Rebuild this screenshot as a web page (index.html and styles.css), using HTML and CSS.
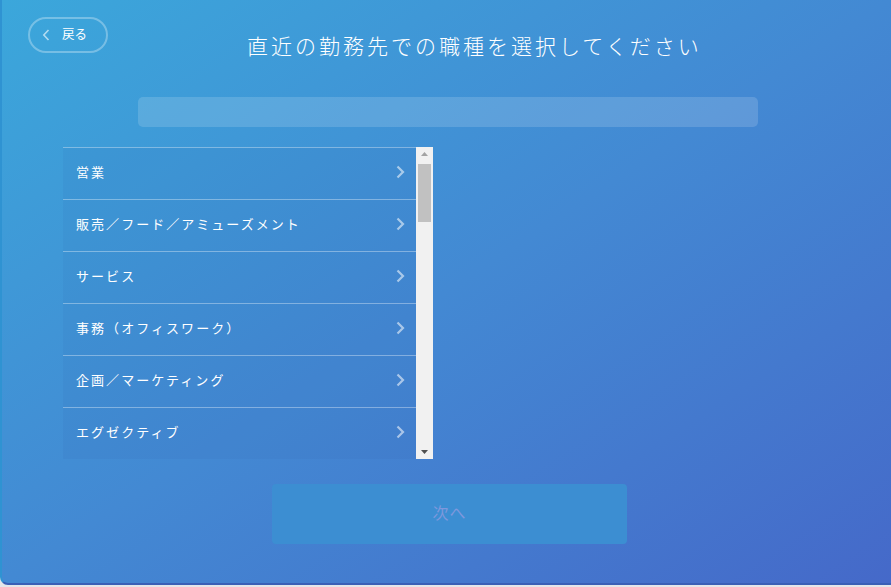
FILE: index.html
```html
<!DOCTYPE html>
<html lang="ja">
<head>
<meta charset="utf-8">
<title>職種選択</title>
<link rel="stylesheet" href="styles.css">
</head>
<body>
<div class="card">
  <header class="header">
    <button class="back">
      <svg class="back-icon" width="8" height="12" viewBox="0 0 8 12"><path d="M6.5 1 L1.8 6 L6.5 11" fill="none" stroke="rgba(255,255,255,0.6)" stroke-width="1.6"/></svg>
      <span>戻る</span>
    </button>
    <h1 class="title">直近の勤務先での職種を選択してください</h1>
  </header>
  <div class="search"></div>
  <div class="list-wrap">
    <ul class="list">
      <li class="row"><span>営業</span><svg class="chev" width="9" height="14" viewBox="0 0 9 14"><path d="M1.5 1.5 L7 7 L1.5 12.5" fill="none" stroke="rgba(255,255,255,0.55)" stroke-width="2.2"/></svg></li>
      <li class="row"><span>販売／フード／アミューズメント</span><svg class="chev" width="9" height="14" viewBox="0 0 9 14"><path d="M1.5 1.5 L7 7 L1.5 12.5" fill="none" stroke="rgba(255,255,255,0.55)" stroke-width="2.2"/></svg></li>
      <li class="row"><span>サービス</span><svg class="chev" width="9" height="14" viewBox="0 0 9 14"><path d="M1.5 1.5 L7 7 L1.5 12.5" fill="none" stroke="rgba(255,255,255,0.55)" stroke-width="2.2"/></svg></li>
      <li class="row"><span>事務（オフィスワーク）</span><svg class="chev" width="9" height="14" viewBox="0 0 9 14"><path d="M1.5 1.5 L7 7 L1.5 12.5" fill="none" stroke="rgba(255,255,255,0.55)" stroke-width="2.2"/></svg></li>
      <li class="row"><span>企画／マーケティング</span><svg class="chev" width="9" height="14" viewBox="0 0 9 14"><path d="M1.5 1.5 L7 7 L1.5 12.5" fill="none" stroke="rgba(255,255,255,0.55)" stroke-width="2.2"/></svg></li>
      <li class="row"><span>エグゼクティブ</span><svg class="chev" width="9" height="14" viewBox="0 0 9 14"><path d="M1.5 1.5 L7 7 L1.5 12.5" fill="none" stroke="rgba(255,255,255,0.55)" stroke-width="2.2"/></svg></li>
    </ul>
    <div class="scrollbar">
      <svg class="arrow" width="17" height="14" viewBox="0 0 17 14"><path d="M5 9 L8.5 5 L12 9 Z" fill="#a3a3a3"/></svg>
      <div class="track"><div class="thumb"></div></div>
      <svg class="arrow" width="17" height="14" viewBox="0 0 17 14"><path d="M5 5 L12 5 L8.5 9 Z" fill="#505050"/></svg>
    </div>
  </div>
  <div class="actions">
    <button class="next">次へ</button>
  </div>
</div>
</body>
</html>
```

FILE: styles.css
```css
* { box-sizing: border-box; }
html, body { margin: 0; padding: 0; }
body {
  width: 891px;
  height: 587px;
  background: #e4e6ea;
  font-family: "Noto Sans CJK JP", "Noto Sans", sans-serif;
  overflow: hidden;
}
.card {
  width: 891px;
  height: 585px;
  background: linear-gradient(to bottom right, #3ba7db 0%, #4389d3 50%, #4569c9 100%);
  border-left: 2px solid #2f93d2;
  border-bottom: 2px solid #3a5fb6;
  border-bottom-left-radius: 8px;
  padding-top: 17px;
  display: flex;
  flex-direction: column;
}
.header {
  display: flex;
  align-items: flex-start;
  padding-left: 26px;
  height: 80px;
}
.back {
  width: 80px;
  height: 36px;
  border: 2px solid rgba(255,255,255,0.3);
  border-radius: 18px;
  background: transparent;
  color: #fff;
  font-family: inherit;
  font-size: 12.5px;
  display: flex;
  align-items: center;
  padding: 0 0 1px 12px;
  gap: 12px;
  cursor: pointer;
}
.back span { line-height: 1; }
.title {
  margin: 13px 0 0 139px;
  color: #fff;
  font-weight: 300;
  font-size: 21px;
  letter-spacing: 3px;
  line-height: 30px;
  white-space: nowrap;
}
.search {
  margin-left: 136px;
  width: 620px;
  height: 30px;
  border-radius: 5px;
  background: rgba(255,255,255,0.15);
}
.list-wrap {
  margin: 20px 0 0 61px;
  display: flex;
  height: 312px;
}
.list {
  list-style: none;
  margin: 0;
  padding: 0;
  width: 353px;
  height: 312px;
  overflow: hidden;
  background: rgba(40,70,150,0.06);
}
.row {
  height: 52px;
  border-top: 1px solid rgba(255,255,255,0.35);
  display: flex;
  align-items: center;
  justify-content: space-between;
  padding: 0 11px 4px 13px;
  color: #fff;
  font-size: 13px;
  letter-spacing: 2.05px;
}
.chev { margin-top: 1px; }
.scrollbar {
  width: 17px;
  height: 312px;
  background: #f1f1f1;
  display: flex;
  flex-direction: column;
}
.arrow { display: block; flex: none; }
.track { flex: 1; padding: 0 2px; }
.thumb {
  height: 58px;
  margin-top: 3px;
  background: #c1c1c1;
}
.actions {
  margin-top: 25px;
  padding-left: 270px;
}
.next {
  width: 355px;
  height: 60px;
  border: none;
  border-radius: 4px;
  background: #3c8ed2;
  color: #7e98dd;
  font-family: inherit;
  font-size: 16px;
  letter-spacing: 1px;
  padding-bottom: 5px;
}
```
